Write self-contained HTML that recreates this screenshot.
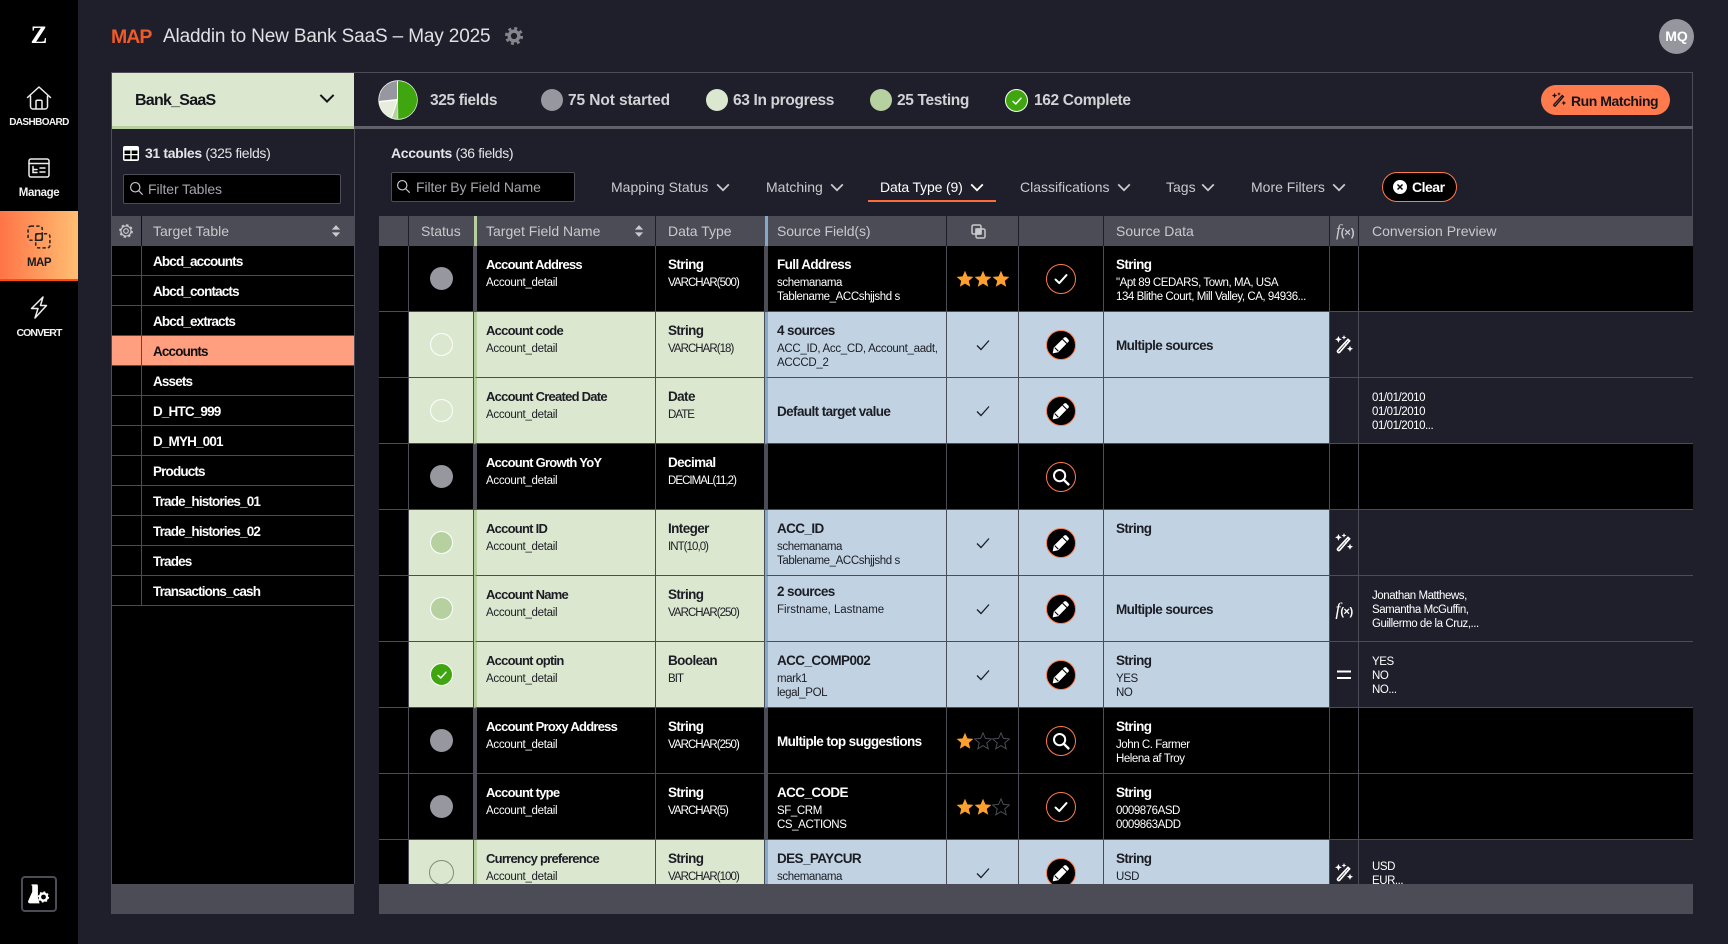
<!DOCTYPE html>
<html><head><meta charset="utf-8"><title>Map</title>
<style>
*{box-sizing:border-box;margin:0;padding:0}
html,body{width:1728px;height:944px;overflow:hidden;background:#1e1f2a;font-family:"Liberation Sans",sans-serif;color:#fff}
.a{position:absolute}
.t{position:absolute;white-space:nowrap;line-height:20px}
svg{display:block;overflow:visible}
.nl{position:absolute;left:0;width:78px;text-align:center;font-size:10px;font-weight:bold;line-height:14px;letter-spacing:-.6px;color:#f2f2f2}
.nav{position:absolute}
.hd{position:absolute;top:216px;height:30px;background:#4b4c56}
.hc{position:absolute;top:0;height:30px;line-height:30px;font-size:14px;color:#c9c9ce;white-space:nowrap}
.vl{position:absolute;top:0;width:1px;height:30px;background:#1e1f2a}
.ft{position:absolute;top:177px;line-height:20px;font-size:14px;color:#c9c9ce;white-space:nowrap}
.lr{position:absolute;left:112px;width:242px;height:30px;background:#000;border-bottom:1px solid #4b4c56}
.lr i{position:absolute;left:29px;top:0;width:1px;height:30px;background:#4b4c56}
.lr span{position:absolute;left:41px;top:1px;line-height:30px;font-size:13.5px;font-weight:bold;letter-spacing:-.85px;color:#fff}
.lr.s{background:#ff9f80;border-bottom-color:#4b4c56}
.lr.s span{color:#101010}
.st{font-size:15.5px;font-weight:bold;letter-spacing:-.35px;color:#d2d2d6;top:91px}
#clip{position:absolute;left:379px;top:246px;width:1314px;height:638px;overflow:hidden}
.r{position:absolute;left:0;width:1314px;height:66px;display:grid;grid-template-columns:30px 65px 182px 109px 182px 72px 85px 226px 29px 334px;font-size:12px}
.r>div{position:relative;height:66px;border-right:1px solid #4b4c56;border-bottom:1px solid #4b4c56;background:#000;color:#fff;padding-top:12px;overflow:hidden}
.r>div:last-child{border-right:0}
.g>div,.b>div{color:#16171d}
.r>.d0{background:#000}
.g>.d1,.g>.d2,.g>.d3{background:#dce7d0;color:#1c1d24}
.g>.d4,.g>.d5,.g>.d6,.g>.d7{background:#c1d3e2;color:#1c1d24}
.g>.d8,.g>.d9{background:#1e1f2a;color:#fff}
.d2{padding-left:9px;border-left:3px solid #4b4c56}
.g>.d2{border-left-color:#b6d09f}
.d3{padding-left:12px}
.d4{padding-left:9px;border-left:3px solid #4b4c56}
.g>.d4{border-left-color:#86a9c8}
.d7{padding-left:12px}
.d9{padding-left:13px}
.r b{display:block;font-size:13.5px;line-height:14px;letter-spacing:-.6px;margin-bottom:4px;white-space:nowrap}
.r .d2 b{font-size:13px;letter-spacing:-.75px}
.r span{display:block;font-size:11.5px;line-height:14px;letter-spacing:-.3px;white-space:nowrap}
.r .d3 span{letter-spacing:-.95px}
.r .d4 span{letter-spacing:-.4px}
.r .d7 span{letter-spacing:-.45px}
.r .d4 span.w{letter-spacing:-.3px}
.r .d4 span.w2{letter-spacing:-.05px}
.r .cv{display:block;font-size:11.5px;line-height:14px;letter-spacing:-.45px}
.m{display:flex;flex-direction:column;justify-content:center;padding-top:2px!important}
.m b{margin:0}
.dot{position:absolute;left:21px;top:21px;width:23px;height:23px;border-radius:50%}
.ns{background:#97979f}
.ip{border:1px solid #fff}
.ts{background:#b6d09f;border:1px solid #fff}
.ic{position:absolute;left:50%;top:50%;transform:translate(-50%,-50%)}
.act{position:absolute;left:27px;top:18px;width:30px;height:30px;border-radius:50%;background:#000;border:1px solid #ff7b4d}
.ck{stroke:#1c1d24;fill:none;stroke-width:1.3}
</style></head><body>
<svg width="0" height="0" style="position:absolute">
<symbol id="star" viewBox="0 0 18 18"><path d="M9 .8l2.400 5.600 6 .5-4.600 4 1.400 5.900L9 13.600l-5.200 3.200 1.400-5.900-4.600-4 6-.5z"/></symbol>
<symbol id="pen" viewBox="0 0 18 18"><path d="M1.500 16.500l1-5L11.800 2.400a1.600 1.600 0 0 1 2.200 0l1.600 1.600a1.600 1.600 0 0 1 0 2.200L6.500 15.500z" fill="#fff"/><path d="M10.400 3.800l3.800 3.800M3.400 11.400l3.200 3.200" stroke="#000" stroke-width="1" fill="none"/></symbol>
<symbol id="mag" viewBox="0 0 18 18"><circle cx="7.600" cy="7.600" r="5.600" fill="none" stroke="#fff" stroke-width="2"/><path d="M11.800 11.800L16.400 16.400" stroke="#fff" stroke-width="2.400" stroke-linecap="round"/></symbol>
<symbol id="chk" viewBox="0 0 18 18"><path d="M3.500 9.500l3.800 3.600 7.200-8" fill="none" stroke="#fff" stroke-width="2" stroke-linecap="round" stroke-linejoin="round"/></symbol>
<symbol id="wand" viewBox="0 0 18 18"><path d="M14 5.200L5 15.600a.9.900 0 0 1-1.300 0l-.3-.3a.9.900 0 0 1 0-1.300L12.600 4z" fill="none" stroke="currentColor" stroke-width="1.500"/><path d="M9.600 7.400l1.800 1.800M4 1.600l.7 1.600 1.600.7-1.600.7L4 6.200l-.7-1.600-1.600-.7 1.600-.7zM14.400 10.400l.6 1.400 1.400.6-1.400.6-.6 1.400-.6-1.400-1.400-.6 1.400-.6zM9 .8l.4 1 1 .4-1 .4-.4 1-.4-1-1-.4 1-.4z" fill="currentColor" stroke="currentColor" stroke-width=".6"/></symbol>
<symbol id="chev" viewBox="0 0 14 9"><path d="M1.200 1.400L7 7.200l5.800-5.800" fill="none" stroke="currentColor" stroke-width="1.800"/></symbol>
<symbol id="srch" viewBox="0 0 18 18"><circle cx="7.500" cy="7.500" r="5.600" fill="none" stroke="#c9c9ce" stroke-width="1.400"/><path d="M11.700 11.700L16.400 16.400" stroke="#c9c9ce" stroke-width="1.400"/></symbol>
<symbol id="sort" viewBox="0 0 12 16"><path d="M6 1l5 5.400H1zM6 15l5-5.400H1z" fill="#c9c9ce"/></symbol>
</svg>

<!-- sidebar -->
<div class="a" style="left:0;top:0;width:78px;height:944px;background:#000"></div>
<div class="t" style="left:0;width:78px;top:19px;text-align:center;font:bold 25px/34px 'Liberation Serif',serif">Z</div>
<svg class="nav" style="left:26px;top:85px" width="26" height="26" viewBox="0 0 26 26" fill="none" stroke="#eee" stroke-width="1.500" stroke-linejoin="round" stroke-linecap="round"><path d="M1.500 12.500L13 2l11.500 10.500M4.500 11v10.500a2.500 2.500 0 0 0 2.500 2.500h12a2.500 2.500 0 0 0 2.500-2.500V11M10 24v-7.500a1.200 1.200 0 0 1 1.200-1.200h3.600a1.200 1.200 0 0 1 1.200 1.200V24"/></svg>
<div class="nl" style="top:116px">DASHBOARD</div>
<svg class="nav" style="left:28px;top:158px" width="22" height="20" viewBox="0 0 22 20" fill="none" stroke="#eee" stroke-width="1.500" stroke-linecap="round"><rect x="1" y="1" width="20" height="18" rx="2"/><path d="M1 5.500h20M5 8.500v6h4M12 10h5M5 11.500h4M12 14h5"/></svg>
<div class="nl" style="top:186px;font-size:11.500px;letter-spacing:-.4px">Manage</div>
<div class="a" style="left:0;top:211px;width:78px;height:70px;background:linear-gradient(90deg,#ff7447,#ffbe72);border-bottom:2px solid #ff4a12"></div>
<svg class="nav" style="left:27px;top:225px" width="24" height="24" viewBox="0 0 22 22" fill="none" stroke="#222" stroke-width="1.400"><rect x="1" y="1" width="13" height="13" rx="2.500" stroke-dasharray="3 2"/><rect x="8" y="8" width="13" height="13" rx="2.500" stroke-dasharray="3 2"/><rect x="8" y="8" width="6" height="6" rx="1"/></svg>
<div class="nl" style="top:256px;font-size:11.500px;letter-spacing:-.5px;color:#1a1a1a">MAP</div>
<svg class="nav" style="left:30px;top:296px" width="18" height="23" viewBox="0 0 18 23" fill="none" stroke="#eee" stroke-width="1.500" stroke-linejoin="round"><path d="M13 1L1.500 12.500H8L5 22 16.500 9.500H10.500z"/></svg>
<div class="nl" style="top:326px;font-size:10.500px;letter-spacing:-.9px">CONVERT</div>
<div class="a" style="left:21px;top:876px;width:36px;height:36px;border:2px solid #4b4c56;border-radius:4px"></div>
<svg class="nav" style="left:28px;top:884px" width="22" height="20" viewBox="0 0 22 20"><path d="M3.500 1h6M4.800 1v7L.8 17a1.200 1.200 0 0 0 1 1.800h9L9.300 13V1.200" fill="#fff" stroke="#fff" stroke-width="1.200"/><circle cx="15.500" cy="13" r="3.600" fill="none" stroke="#fff" stroke-width="2.400"/><circle cx="15.500" cy="13" r="5" fill="none" stroke="#fff" stroke-width="1.200" stroke-dasharray="1.800 2.100"/></svg>

<!-- header -->
<div class="t" style="left:111px;top:27px;font-size:19.500px;font-weight:bold;letter-spacing:-1px;color:#f05a28">MAP</div>
<div class="t" style="left:163px;top:27px;font-size:19px;letter-spacing:-.15px;color:#e0e0e4">Aladdin to New Bank SaaS – May 2025</div>
<svg class="a" style="left:505px;top:27px" width="18" height="18" viewBox="0 0 18 18"><circle cx="9" cy="9" r="4.800" fill="none" stroke="#85858d" stroke-width="3.400"/><circle cx="9" cy="9" r="7.700" fill="none" stroke="#85858d" stroke-width="2.600" stroke-dasharray="3 3.050"/></svg>
<div class="a" style="left:1659px;top:19px;width:35px;height:35px;border-radius:50%;background:#96969e;text-align:center;font:bold 14px/35px 'Liberation Sans',sans-serif;color:#fff">MQ</div>

<!-- frame -->
<div class="a" style="left:111px;top:72px;width:1582px;height:1px;background:#4b4c56"></div>
<div class="a" style="left:111px;top:72px;width:1px;height:812px;background:#4b4c56"></div>
<div class="a" style="left:1692px;top:72px;width:1px;height:812px;background:#4b4c56"></div>
<div class="a" style="left:112px;top:73px;width:242px;height:56px;background:#dce7d0;border-bottom:3px solid #b6d09f"></div>
<div class="a" style="left:354px;top:126px;width:1339px;height:3px;background:#5f6068"></div>
<div class="a" style="left:354px;top:129px;width:1px;height:755px;background:#4b4c56"></div>
<div class="t" style="left:135px;top:90px;font-size:16px;font-weight:bold;letter-spacing:-.75px;color:#14151b;margin-top:1px">Bank_SaaS</div>
<svg class="a" style="left:319px;top:93px;color:#14151b" width="16" height="11"><use href="#chev" width="16" height="11"/></svg>

<!-- status bar -->
<svg class="a" style="left:378px;top:80px" width="40" height="40" viewBox="-20 -20 40 40"><circle r="19.700" fill="#fff"/><path d="M0 0L0 -19A19 19 0 0 1 .2 19z" fill="#3fa610"/><path d="M0 0L-.4 19A19 19 0 0 1 -6 18z" fill="#b6d09f"/><path d="M-1.200 .5L-7 18A19 19 0 0 1 -18.800 2.500z" fill="#e6eddc"/><path d="M-1 -1V-19A19 19 0 0 0 -18.900 1z" fill="#97979f"/></svg>
<div class="t st" style="left:430px">325 fields</div>
<div class="a ns" style="left:541px;top:89px;width:22px;height:22px;border-radius:50%"></div>
<div class="t st" style="left:568px;letter-spacing:-.1px">75 Not started</div>
<div class="a" style="left:706px;top:89px;width:22px;height:22px;border-radius:50%;background:#dce7d0"></div>
<div class="t st" style="left:733px">63 In progress</div>
<div class="a" style="left:870px;top:89px;width:22px;height:22px;border-radius:50%;background:#b6d09f"></div>
<div class="t st" style="left:897px">25 Testing</div>
<div class="a" style="left:1005px;top:89px;width:23px;height:23px;border-radius:50%;background:#3fa610;border:1px solid #fff"><svg class="ic" width="13" height="13"><use href="#chk" width="13" height="13"/></svg></div>
<div class="t st" style="left:1034px">162 Complete</div>
<div class="a" style="left:1541px;top:85px;width:129px;height:30px;border-radius:15px;background:#ff7b4d"></div>
<svg class="a" style="left:1551px;top:92px;color:#14151b" width="16" height="16"><use href="#wand" width="16" height="16"/></svg>
<div class="t" style="left:1571px;top:91px;font-size:14px;font-weight:bold;letter-spacing:-.45px;color:#14151b">Run Matching</div>

<!-- left panel -->
<svg class="a" style="left:123px;top:146px" width="16" height="15" viewBox="0 0 16 15"><rect width="16" height="15" rx="2" fill="#fff"/><path d="M1.500 4.500h5.800v3.500H1.500zM8.700 4.500h5.800v3.500H8.700zM1.500 9.300h5.800v4H1.500zM8.700 9.300h5.800v4H8.700z" fill="#000"/></svg>
<div class="t" style="left:145px;top:143px;font-size:14px;letter-spacing:-.35px;color:#e4e4e8"><b>31 tables</b> (325 fields)</div>
<div class="a" style="left:123px;top:174px;width:218px;height:30px;background:#000;border:1px solid #4b4c56;border-radius:2px"></div>
<svg class="a" style="left:129px;top:181px" width="15" height="15"><use href="#srch" width="15" height="15"/></svg>
<div class="t" style="left:148px;top:179px;font-size:14px;letter-spacing:-.1px;color:#a5a5ab">Filter Tables</div>

<div class="hd" style="left:112px;width:242px">
<svg class="a" style="left:7px;top:8px" width="14" height="14" viewBox="0 0 18 18"><circle cx="9" cy="9" r="3" fill="none" stroke="#c9c9ce" stroke-width="1.500"/><circle cx="9" cy="9" r="6.500" fill="none" stroke="#c9c9ce" stroke-width="1.500"/><circle cx="9" cy="9" r="7.800" fill="none" stroke="#c9c9ce" stroke-width="2" stroke-dasharray="3 3.120"/></svg>
<div class="vl" style="left:29px;width:1px;background:#111"></div>
<div class="hc" style="left:41px">Target Table</div>
<svg class="a" style="left:219px;top:8px" width="10" height="14"><use href="#sort" width="10" height="14"/></svg>
</div>
<div class="lr" style="top:246px"><i></i><span>Abcd_accounts</span></div>
<div class="lr" style="top:276px"><i></i><span>Abcd_contacts</span></div>
<div class="lr" style="top:306px"><i></i><span>Abcd_extracts</span></div>
<div class="lr s" style="top:336px"><i></i><span>Accounts</span></div>
<div class="lr" style="top:366px"><i></i><span>Assets</span></div>
<div class="lr" style="top:396px"><i></i><span>D_HTC_999</span></div>
<div class="lr" style="top:426px"><i></i><span>D_MYH_001</span></div>
<div class="lr" style="top:456px"><i></i><span>Products</span></div>
<div class="lr" style="top:486px"><i></i><span>Trade_histories_01</span></div>
<div class="lr" style="top:516px"><i></i><span>Trade_histories_02</span></div>
<div class="lr" style="top:546px"><i></i><span>Trades</span></div>
<div class="lr" style="top:576px"><i></i><span>Transactions_cash</span></div>
<div class="a" style="left:112px;top:606px;width:242px;height:278px;background:#000"></div>
<div class="a" style="left:111px;top:884px;width:243px;height:30px;background:#4b4c56"></div>

<!-- filters -->
<div class="t" style="left:391px;top:143px;font-size:14px;letter-spacing:-.35px;color:#e4e4e8"><b>Accounts</b> (36 fields)</div>
<div class="a" style="left:391px;top:172px;width:184px;height:30px;background:#000;border:1px solid #4b4c56;border-radius:2px"></div>
<svg class="a" style="left:396px;top:179px" width="15" height="15"><use href="#srch" width="15" height="15"/></svg>
<div class="t" style="left:416px;top:177px;font-size:14px;letter-spacing:-.1px;color:#a5a5ab">Filter By Field Name</div>
<div class="ft" style="left:611px">Mapping Status</div>
<svg class="a" style="left:716px;top:183px;color:#c9c9ce" width="14" height="9"><use href="#chev" width="14" height="9"/></svg>
<div class="ft" style="left:766px">Matching</div>
<svg class="a" style="left:830px;top:183px;color:#c9c9ce" width="14" height="9"><use href="#chev" width="14" height="9"/></svg>
<div class="ft" style="left:880px;color:#fff;letter-spacing:-.15px">Data Type (9)</div>
<svg class="a" style="left:970px;top:183px;color:#fff" width="14" height="9"><use href="#chev" width="14" height="9"/></svg>
<div class="a" style="left:868px;top:200px;width:128px;height:2px;background:#ff6a3d"></div>
<div class="ft" style="left:1020px">Classifications</div>
<svg class="a" style="left:1117px;top:183px;color:#c9c9ce" width="14" height="9"><use href="#chev" width="14" height="9"/></svg>
<div class="ft" style="left:1166px">Tags</div>
<svg class="a" style="left:1201px;top:183px;color:#c9c9ce" width="14" height="9"><use href="#chev" width="14" height="9"/></svg>
<div class="ft" style="left:1251px">More Filters</div>
<svg class="a" style="left:1332px;top:183px;color:#c9c9ce" width="14" height="9"><use href="#chev" width="14" height="9"/></svg>
<div class="a" style="left:1382px;top:172px;width:75px;height:30px;border-radius:15px;background:#000;border:1px solid #ff7b4d"></div>
<svg class="a" style="left:1393px;top:180px" width="14" height="14" viewBox="0 0 14 14"><circle cx="7" cy="7" r="7" fill="#fff"/><path d="M4.500 4.500l5 5M9.500 4.500l-5 5" stroke="#000" stroke-width="1.500"/></svg>
<div class="t" style="left:1412px;top:177px;font-size:14px;font-weight:bold;letter-spacing:-.5px;color:#fff">Clear</div>

<!-- table header -->
<div class="hd" style="left:379px;width:1314px">
<div class="vl" style="left:29px"></div>
<div class="hc" style="left:42px">Status</div>
<div class="a" style="left:95px;top:0;width:3px;height:30px;background:#b6d09f"></div>
<div class="hc" style="left:107px">Target Field Name</div>
<svg class="a" style="left:255px;top:8px" width="10" height="14"><use href="#sort" width="10" height="14"/></svg>
<div class="vl" style="left:276px"></div>
<div class="hc" style="left:289px">Data Type</div>
<div class="a" style="left:386px;top:0;width:3px;height:30px;background:#86a9c8"></div>
<div class="hc" style="left:398px;letter-spacing:-.1px">Source Field(s)</div>
<div class="vl" style="left:567px"></div>
<svg class="a" style="left:592px;top:8px" width="15" height="15" viewBox="0 0 15 15" fill="none" stroke="#c9c9ce" stroke-width="1.500"><rect x="1" y="1" width="9" height="9" rx="1.500"/><rect x="5" y="5" width="9" height="9" rx="1.500"/><rect x="5" y="5" width="5" height="5" fill="#c9c9ce"/></svg>
<div class="vl" style="left:639px"></div>
<div class="vl" style="left:724px"></div>
<div class="hc" style="left:737px">Source Data</div>
<div class="vl" style="left:950px"></div>
<div class="hc" style="left:957px;font-family:'Liberation Serif',serif;font-style:italic;font-size:17px">f<span style="font:bold 11px 'Liberation Sans',sans-serif">(×)</span></div>
<div class="vl" style="left:979px"></div>
<div class="hc" style="left:993px">Conversion Preview</div>
</div>

<!-- rows -->
<div id="clip">
<div class="r" style="top:0"><div class="d0"></div><div class="d1"><div class="dot ns"></div></div><div class="d2"><b>Account Address</b><span>Account_detail</span></div><div class="d3"><b>String</b><span>VARCHAR(500)</span></div><div class="d4"><b>Full Address</b><span>schemanama</span><span>Tablename_ACCshjjshd s</span></div><div class="d5"><svg class="a" style="left:9px;top:24px;fill:#ffa02e" width="54" height="18"><use href="#star" width="18" height="18"/><use href="#star" x="18" width="18" height="18"/><use href="#star" x="36" width="18" height="18"/></svg></div><div class="d6"><div class="act"><svg class="ic" width="18" height="18"><use href="#chk" width="18" height="18"/></svg></div></div><div class="d7"><b>String</b><span>"Apt 89 CEDARS, Town, MA, USA</span><span>134 Blithe Court, Mill Valley, CA, 94936...</span></div><div class="d8"></div><div class="d9"></div></div>

<div class="r g" style="top:66px"><div class="d0"></div><div class="d1"><div class="dot ip"></div></div><div class="d2"><b>Account code</b><span>Account_detail</span></div><div class="d3"><b>String</b><span>VARCHAR(18)</span></div><div class="d4"><b>4 sources</b><span class="w">ACC_ID, Acc_CD, Account_aadt,</span><span class="w">ACCCD_2</span></div><div class="d5"><svg class="a ck" style="left:29px;top:26px" width="14" height="14" viewBox="0 0 14 14"><path d="M1 7.500l4 4 8-9"/></svg></div><div class="d6"><div class="act"><svg class="ic" width="20" height="20"><use href="#pen" width="20" height="20"/></svg></div></div><div class="d7 m"><b>Multiple sources</b></div><div class="d8"><svg class="ic" style="color:#fff" width="20" height="20"><use href="#wand" width="20" height="20"/></svg></div><div class="d9"></div></div>

<div class="r g" style="top:132px"><div class="d0"></div><div class="d1"><div class="dot ip"></div></div><div class="d2"><b>Account Created Date</b><span>Account_detail</span></div><div class="d3"><b>Date</b><span>DATE</span></div><div class="d4 m"><b>Default target value</b></div><div class="d5"><svg class="a ck" style="left:29px;top:26px" width="14" height="14" viewBox="0 0 14 14"><path d="M1 7.500l4 4 8-9"/></svg></div><div class="d6"><div class="act"><svg class="ic" width="20" height="20"><use href="#pen" width="20" height="20"/></svg></div></div><div class="d7"></div><div class="d8"></div><div class="d9 m"><span class="cv">01/01/2010</span><span class="cv">01/01/2010</span><span class="cv">01/01/2010...</span></div></div>

<div class="r" style="top:198px"><div class="d0"></div><div class="d1"><div class="dot ns"></div></div><div class="d2"><b>Account Growth YoY</b><span>Account_detail</span></div><div class="d3"><b>Decimal</b><span>DECIMAL(11,2)</span></div><div class="d4"></div><div class="d5"></div><div class="d6"><div class="act"><svg class="ic" width="18" height="18"><use href="#mag" width="18" height="18"/></svg></div></div><div class="d7"></div><div class="d8"></div><div class="d9"></div></div>

<div class="r g" style="top:264px"><div class="d0"></div><div class="d1"><div class="dot ts"></div></div><div class="d2"><b>Account ID</b><span>Account_detail</span></div><div class="d3"><b>Integer</b><span>INT(10,0)</span></div><div class="d4"><b>ACC_ID</b><span>schemanama</span><span>Tablename_ACCshjjshd s</span></div><div class="d5"><svg class="a ck" style="left:29px;top:26px" width="14" height="14" viewBox="0 0 14 14"><path d="M1 7.500l4 4 8-9"/></svg></div><div class="d6"><div class="act"><svg class="ic" width="20" height="20"><use href="#pen" width="20" height="20"/></svg></div></div><div class="d7"><b>String</b></div><div class="d8"><svg class="ic" style="color:#fff" width="20" height="20"><use href="#wand" width="20" height="20"/></svg></div><div class="d9"></div></div>

<div class="r g" style="top:330px"><div class="d0"></div><div class="d1"><div class="dot ts"></div></div><div class="d2"><b>Account Name</b><span>Account_detail</span></div><div class="d3"><b>String</b><span>VARCHAR(250)</span></div><div class="d4" style="padding-top:9px"><b>2 sources</b><span class="w2">Firstname, Lastname</span></div><div class="d5"><svg class="a ck" style="left:29px;top:26px" width="14" height="14" viewBox="0 0 14 14"><path d="M1 7.500l4 4 8-9"/></svg></div><div class="d6"><div class="act"><svg class="ic" width="20" height="20"><use href="#pen" width="20" height="20"/></svg></div></div><div class="d7 m"><b>Multiple sources</b></div><div class="d8"><div class="ic" style="white-space:nowrap;font:italic 18px/18px 'Liberation Serif',serif;color:#fff">f<span style="display:inline;font:bold 11px 'Liberation Sans',sans-serif;letter-spacing:-.5px">(×)</span></div></div><div class="d9 m"><span class="cv">Jonathan Matthews,</span><span class="cv">Samantha McGuffin,</span><span class="cv">Guillermo de la Cruz,...</span></div></div>

<div class="r g" style="top:396px"><div class="d0"></div><div class="d1"><div class="dot" style="background:#3fa610;border:1px solid #fff"><svg class="ic" width="13" height="13"><use href="#chk" width="13" height="13"/></svg></div></div><div class="d2"><b>Account optin</b><span>Account_detail</span></div><div class="d3"><b>Boolean</b><span>BIT</span></div><div class="d4"><b>ACC_COMP002</b><span>mark1</span><span>legal_POL</span></div><div class="d5"><svg class="a ck" style="left:29px;top:26px" width="14" height="14" viewBox="0 0 14 14"><path d="M1 7.500l4 4 8-9"/></svg></div><div class="d6"><div class="act"><svg class="ic" width="20" height="20"><use href="#pen" width="20" height="20"/></svg></div></div><div class="d7"><b>String</b><span>YES</span><span>NO</span></div><div class="d8"><svg class="ic" width="14" height="10"><path d="M0 1.500h14M0 8h14" stroke="#fff" stroke-width="2"/></svg></div><div class="d9 m"><span class="cv">YES</span><span class="cv">NO</span><span class="cv">NO...</span></div></div>

<div class="r" style="top:462px"><div class="d0"></div><div class="d1"><div class="dot ns"></div></div><div class="d2"><b>Account Proxy Address</b><span>Account_detail</span></div><div class="d3"><b>String</b><span>VARCHAR(250)</span></div><div class="d4 m"><b>Multiple top suggestions</b></div><div class="d5"><svg class="a" style="left:9px;top:24px;fill:#ffa02e" width="54" height="18"><use href="#star" width="18" height="18"/><g style="fill:none;stroke:#4b4c56"><use href="#star" x="18" width="18" height="18"/><use href="#star" x="36" width="18" height="18"/></g></svg></div><div class="d6"><div class="act"><svg class="ic" width="18" height="18"><use href="#mag" width="18" height="18"/></svg></div></div><div class="d7"><b>String</b><span>John C. Farmer</span><span>Helena af Troy</span></div><div class="d8"></div><div class="d9"></div></div>

<div class="r" style="top:528px"><div class="d0"></div><div class="d1"><div class="dot ns"></div></div><div class="d2"><b>Account type</b><span>Account_detail</span></div><div class="d3"><b>String</b><span>VARCHAR(5)</span></div><div class="d4"><b>ACC_CODE</b><span>SF_CRM</span><span>CS_ACTIONS</span></div><div class="d5"><svg class="a" style="left:9px;top:24px;fill:#ffa02e" width="54" height="18"><use href="#star" width="18" height="18"/><use href="#star" x="18" width="18" height="18"/><g style="fill:none;stroke:#4b4c56"><use href="#star" x="36" width="18" height="18"/></g></svg></div><div class="d6"><div class="act"><svg class="ic" width="18" height="18"><use href="#chk" width="18" height="18"/></svg></div></div><div class="d7"><b>String</b><span>0009876ASD</span><span>0009863ADD</span></div><div class="d8"></div><div class="d9"></div></div>

<div class="r g" style="top:594px"><div class="d0"></div><div class="d1"><div class="dot" style="border:1px solid #7f8f78;left:20px;top:20px;width:25px;height:25px"></div></div><div class="d2"><b>Currency preference</b><span>Account_detail</span></div><div class="d3"><b>String</b><span>VARCHAR(100)</span></div><div class="d4"><b>DES_PAYCUR</b><span>schemanama</span></div><div class="d5"><svg class="a ck" style="left:29px;top:26px" width="14" height="14" viewBox="0 0 14 14"><path d="M1 7.500l4 4 8-9"/></svg></div><div class="d6"><div class="act"><svg class="ic" width="20" height="20"><use href="#pen" width="20" height="20"/></svg></div></div><div class="d7"><b>String</b><span>USD</span></div><div class="d8"><svg class="ic" style="color:#fff" width="20" height="20"><use href="#wand" width="20" height="20"/></svg></div><div class="d9 m"><span class="cv">USD</span><span class="cv">EUR...</span></div></div>
</div>
<div class="a" style="left:379px;top:884px;width:1314px;height:30px;background:#4b4c56"></div>
</body></html>
